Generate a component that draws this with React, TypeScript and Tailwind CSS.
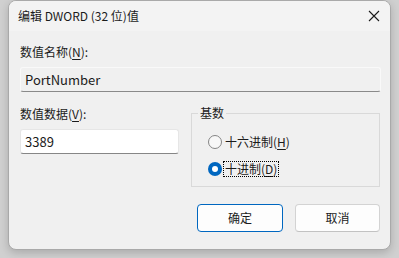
const font = { fontFamily: '"Microsoft YaHei UI", "Noto Sans CJK SC", "Noto Sans", sans-serif' };

function Radio({ checked, children }: { checked?: boolean; children: React.ReactNode }) {
  return (
    <div className="flex h-[16px] items-center">
      {checked ? (
        <span className="flex h-[14px] w-[14px] items-center justify-center rounded-full bg-[#0067c0]">
          <span className="h-[6px] w-[6px] rounded-full bg-white" />
        </span>
      ) : (
        <span className="h-[14px] w-[14px] rounded-full border border-[#858585] bg-[#f7f7f7]" />
      )}
      <span
        className={
          "ml-[2px] px-[1px] leading-[14px] " +
          (checked ? "outline outline-1 outline-dotted outline-black" : "")
        }
      >
        {children}
      </span>
    </div>
  );
}

export default function App() {
  return (
    <main className="h-[258px] w-[399px] bg-[#d0d0d0] pl-[8px] text-[12px] text-[#1b1b1b]" style={font}>
      <div className="flex h-[250px] w-[383px] flex-col overflow-hidden rounded-b-[8px] rounded-t-[8px] border border-[#a9a9a9] bg-[#f0f0f0] shadow-[0_3px_8px_rgba(0,0,0,0.18)]">
        {/* 标题栏 */}
        <div className="flex h-[30px] shrink-0 items-center justify-between bg-[#f3f3f3] pl-[9px] pr-[9px]">
          <span className="leading-none">编辑 DWORD (32 位)值</span>
          <svg width="12" height="12" viewBox="0 0 12 12" className="mr-[1px]">
            <path d="M1 1L11 11M11 1L1 11" stroke="#1b1b1b" strokeWidth="1.1" />
          </svg>
        </div>

        <div className="flex flex-1 flex-col pl-[11px] pr-[10px] pt-[13px]">
          <div className="leading-[16px]">
            数值名称(<span className="underline underline-offset-2">N</span>):
          </div>
          <div className="mt-[7px] flex h-[25px] w-[361px] items-center rounded-[3px] border border-[#f9f9f9] border-b-[#8a8a8a] bg-[#f0f0f0] pl-[4px] text-[13px]">
            PortNumber
          </div>

          <div className="mt-[14px] flex gap-[12px]">
            <div className="flex w-[160px] flex-col">
              <div className="leading-[16px]">
                数值数据(<span className="underline underline-offset-2">V</span>):
              </div>
              <div className="mt-[7px] flex h-[25px] items-center rounded-[3px] border border-[#e6e6e6] border-b-[#868686] bg-white pl-[4px] text-[13px]">
                3389
              </div>
            </div>

            <fieldset className="h-[81px] w-[190px] border border-[#d9d9d9] pl-[16px] pr-[15px]">
              <legend className="ml-[-10px] px-[2px] leading-[14px]">基数</legend>
              <div className="mt-[14px] flex flex-col gap-[11px]">
                <Radio>
                  十六进制(<span className="underline underline-offset-2">H</span>)
                </Radio>
                <Radio checked>
                  十进制(<span className="underline underline-offset-2">D</span>)
                </Radio>
              </div>
            </fieldset>
          </div>

          <div className="mt-[17px] flex justify-end gap-[12px]">
            <button className="flex h-[28px] w-[86px] items-center justify-center rounded-[4px] border border-[#0067c0] bg-[#fdfdfd]">
              确定
            </button>
            <button className="flex h-[28px] w-[85px] items-center justify-center rounded-[4px] border border-[#d3d3d3] border-b-[#c2c2c2] bg-[#fdfdfd]">
              取消
            </button>
          </div>
        </div>
      </div>
    </main>
  );
}
